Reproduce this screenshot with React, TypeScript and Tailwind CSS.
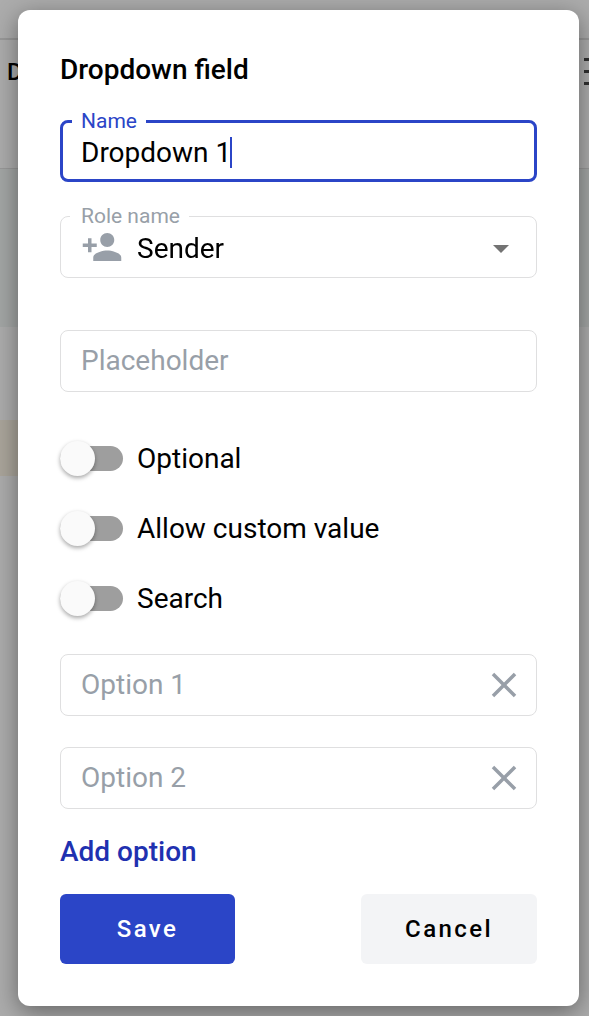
import { useId, useState } from "react";
import type { ReactNode } from "react";
import { MdClose, MdPersonAdd } from "react-icons/md";

function PageBehind() {
  return (
    <div aria-hidden="true" className="absolute inset-0 flex flex-col overflow-hidden bg-[#acacac]">
      <div className="h-10 shrink-0 border-b-2 border-[#989898]" />
      <div className="flex h-[129px] shrink-0 items-start justify-between border-b border-[#989898] pt-4 pl-[7px]">
        <span className="text-2xl font-medium text-black">D</span>
        <span className="flex w-[5px] flex-col gap-[9px] overflow-hidden pt-[2px]">
          <span className="h-[3px] w-6 bg-[#303030]" />
          <span className="h-[3px] w-6 bg-[#303030]" />
          <span className="h-[3px] w-6 bg-[#303030]" />
        </span>
      </div>
      <div className="h-[158px] shrink-0 bg-[#a3a6a5]" />
      <div className="h-[93px] shrink-0" />
      <div className="h-14 w-1/2 shrink-0 bg-[#aaa59b]" />
    </div>
  );
}

function Switch({ label }: { label: string }) {
  const [on, setOn] = useState(false);
  return (
    <label className="flex h-[70px] cursor-pointer items-center gap-[14px] text-[28px] leading-9">
      <span className="flex h-[25px] w-[63px] items-center rounded-full bg-[#9e9e9e] has-checked:justify-end has-checked:bg-[#95a3e3] has-focus-visible:outline-2">
        <input
          type="checkbox"
          role="switch"
          checked={on}
          onChange={(e) => setOn(e.target.checked)}
          className="size-[35px] shrink-0 cursor-pointer appearance-none rounded-full bg-[#fafafa] shadow-[0_2px_4px_rgba(0,0,0,0.35)] outline-none checked:bg-[#2b45c7]"
        />
      </span>
      <span className="pt-0.5">{label}</span>
    </label>
  );
}

function OutlinedBox({ children }: { children: ReactNode }) {
  return (
    <div className="flex h-[62px] items-center rounded-lg border border-[#dfdfe0] pr-[11px] pl-5">
      {children}
    </div>
  );
}

const fieldText =
  "h-9 w-full min-w-0 bg-transparent text-[28px] leading-9 text-black outline-none placeholder:text-[#989fa8]";

export default function App() {
  const id = useId();
  const [name, setName] = useState("Dropdown 1");
  const [focused, setFocused] = useState(true);
  const [options, setOptions] = useState(["Option 1", "Option 2"]);

  return (
    <div className="relative min-h-screen font-[Roboto,sans-serif]">
      <PageBehind />
      <div className="relative px-[18px] py-[10px] pr-[10px]">
        <form
          role="dialog"
          aria-labelledby={id + "title"}
          onSubmit={(e) => e.preventDefault()}
          className="flex flex-col rounded-xl bg-white p-[42px] text-black shadow-[0_6px_24px_rgba(0,0,0,0.42)]"
        >
          <h1 id={id + "title"} className="text-[28px] leading-9 font-medium">
            Dropdown field
          </h1>

          <fieldset className="mt-5 h-[74px] rounded-lg border-3 border-[#2b45c7] px-[9px]">
            <legend className="h-[27px] px-[9px] text-[21px] leading-[27px] text-[#2b45c7]">
              <label htmlFor={id + "name"}>Name</label>
            </legend>
            <div className="relative px-[9px]">
              <input
                id={id + "name"}
                autoFocus
                value={name}
                onChange={(e) => setName(e.target.value)}
                onFocus={() => setFocused(true)}
                onBlur={() => setFocused(false)}
                className={fieldText + " block caret-transparent"}
              />
              {focused && (
                <span
                  aria-hidden="true"
                  className="pointer-events-none absolute top-[2px] left-[158px] h-[31px] w-[2px] bg-[#2b45c7]"
                />
              )}
            </div>
          </fieldset>

          <fieldset className="mt-[21px] h-[75px] rounded-lg border border-[#dfdfe0] px-[9px]">
            <legend className="h-[27px] pr-[9px] pl-[11px] text-[21px] leading-[27px] text-[#989fa8]">
              <label htmlFor={id + "role"}>Role name</label>
            </legend>
            <div className="flex items-start gap-[14px] pl-[11px]">
              <MdPersonAdd className="-mt-1 size-[42px] shrink-0 text-[#989fa8]" />
              <div className="relative grow pt-px">
                <select
                  id={id + "role"}
                  className="block h-9 w-full appearance-none bg-transparent text-[28px] leading-9 outline-none"
                >
                  <option>Sender</option>
                </select>
                <svg
                  viewBox="0 0 16 8"
                  className="pointer-events-none absolute top-[15px] right-[18px] h-2 w-4 fill-[#737373]"
                >
                  <path d="M0 0h16L8 8z" />
                </svg>
              </div>
            </div>
          </fieldset>

          <div className="mt-[52px] mb-[31px]">
            <OutlinedBox>
              <input aria-label="Placeholder" placeholder="Placeholder" className={fieldText} />
            </OutlinedBox>
          </div>

          <Switch label="Optional" />
          <Switch label="Allow custom value" />
          <Switch label="Search" />

          <div className="mt-[21px] flex flex-col gap-[31px]">
            {options.map((option) => (
              <OutlinedBox key={option}>
                <input aria-label={option} placeholder={option} className={fieldText} />
                <button
                  type="button"
                  aria-label={"Remove " + option}
                  onClick={() => setOptions(options.filter((o) => o !== option))}
                  className="shrink-0 cursor-pointer text-[#989fa8]"
                >
                  <MdClose className="size-[42px]" />
                </button>
              </OutlinedBox>
            ))}
          </div>

          <button
            type="button"
            onClick={() => setOptions([...options, "Option " + (options.length + 1)])}
            className="mt-[25px] cursor-pointer self-start text-[28px] leading-9 font-medium text-[#1f31b0]"
          >
            Add option
          </button>

          <div className="mt-6 flex justify-between text-2xl font-medium tracking-widest">
            <button type="submit" className="h-[70px] w-[175px] cursor-pointer rounded-md bg-[#2b45c7] text-white">
              Save
            </button>
            <button type="button" className="h-[70px] w-[176px] cursor-pointer rounded-md bg-[#f3f4f6] text-black">
              Cancel
            </button>
          </div>
        </form>
      </div>
    </div>
  );
}
